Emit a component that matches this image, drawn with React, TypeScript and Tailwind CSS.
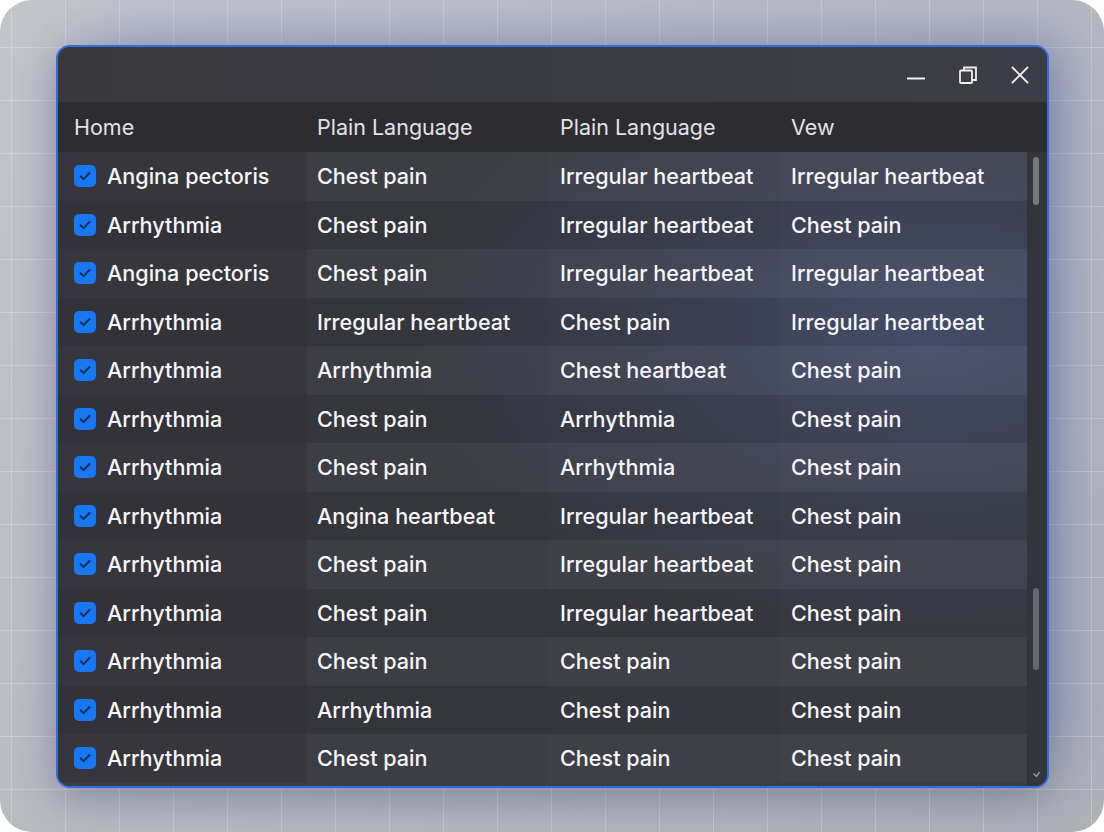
import React from "react";

const rows: [string, string, string, string][] = [
  ["Angina pectoris", "Chest pain", "Irregular heartbeat", "Irregular heartbeat"],
  ["Arrhythmia", "Chest pain", "Irregular heartbeat", "Chest pain"],
  ["Angina pectoris", "Chest pain", "Irregular heartbeat", "Irregular heartbeat"],
  ["Arrhythmia", "Irregular heartbeat", "Chest pain", "Irregular heartbeat"],
  ["Arrhythmia", "Arrhythmia", "Chest heartbeat", "Chest pain"],
  ["Arrhythmia", "Chest pain", "Arrhythmia", "Chest pain"],
  ["Arrhythmia", "Chest pain", "Arrhythmia", "Chest pain"],
  ["Arrhythmia", "Angina heartbeat", "Irregular heartbeat", "Chest pain"],
  ["Arrhythmia", "Chest pain", "Irregular heartbeat", "Chest pain"],
  ["Arrhythmia", "Chest pain", "Irregular heartbeat", "Chest pain"],
  ["Arrhythmia", "Chest pain", "Chest pain", "Chest pain"],
  ["Arrhythmia", "Arrhythmia", "Chest pain", "Chest pain"],
  ["Arrhythmia", "Chest pain", "Chest pain", "Chest pain"],
];

function Check() {
  return (
    <span className="flex h-[22px] w-[22px] shrink-0 items-center justify-center rounded-[5px] bg-[#1877f2]">
      <svg width="16" height="16" viewBox="0 0 16 16" fill="none">
        <path d="M3.5 8.2l3 3 6-6.2" stroke="#17264a" strokeWidth="1.8" strokeLinecap="round" strokeLinejoin="round" />
      </svg>
    </span>
  );
}

export default function App() {
  return (
    <div className="h-[832px] w-[1104px] bg-white font-['Inter','Liberation_Sans',sans-serif]">
      <div className="h-full w-full rounded-[32px] bg-[#b3b5bc] [background-image:linear-gradient(to_right,rgba(255,255,255,0.24)_1px,transparent_1px),linear-gradient(to_bottom,rgba(255,255,255,0.24)_1px,transparent_1px),linear-gradient(135deg,#c2c4ca,#aeb0b8)] [background-size:54px_53px,54px_53px,100%_100%] [background-position:11px_47px,11px_47px,0_0] pl-[56px] pt-[45px]">
        <div className="flex h-[743px] w-[993px] flex-col overflow-hidden rounded-[14px] border-2 border-[#2f6fe0] bg-[#38383e] shadow-[0_10px_40px_rgba(40,50,90,0.35),30px_-20px_60px_-12px_rgba(70,95,200,0.28)]">
          {/* title bar */}
          <div className="flex h-[55px] shrink-0 items-center justify-end gap-[32px] bg-[linear-gradient(90deg,#38383d,#3c3d46)] pr-[17px]">
            <svg width="20" height="20" viewBox="0 0 20 20" fill="none">
              <path d="M1 13.5h18" stroke="#f0f0f2" strokeWidth="1.8" />
            </svg>
            <svg width="20" height="20" viewBox="0 0 20 20" fill="none">
              <rect x="2" y="5.5" width="12" height="12.5" rx="1" stroke="#f0f0f2" strokeWidth="1.8" />
              <path d="M6 5.5V2.5h12v12.5h-4" stroke="#f0f0f2" strokeWidth="1.8" />
            </svg>
            <svg width="20" height="20" viewBox="0 0 20 20" fill="none">
              <path d="M2.5 2.5l15 15M17.5 2.5l-15 15" stroke="#f0f0f2" strokeWidth="1.8" strokeLinecap="round" />
            </svg>
          </div>
          {/* header */}
          <div className="grid h-[50px] shrink-0 grid-cols-[249px_242px_231px_247px_20px] items-center bg-[#2c2c31] text-[21.5px] text-[#e2e2e6]">
            <div className="pl-[16px]">Home</div>
            <div className="pl-[10px]">Plain Language</div>
            <div className="pl-[11px]">Plain Language</div>
            <div className="pl-[11px]">Vew</div>
            <div />
          </div>
          {/* body */}
          <div className="relative flex flex-1 overflow-hidden bg-[radial-gradient(ellipse_520px_300px_at_88%_28%,#47506d_0%,#3f4352_55%,#3b3c44_100%)]">
            <div className="flex-1">
              {rows.map((r, i) => (
                <div
                  key={i}
                  className={
                    "grid h-[48.5px] grid-cols-[249px_242px_231px_247px] items-center text-[21.6px] font-medium text-[#f5f5f7] " +
                    (i % 2 === 0 ? "bg-white/[0.03]" : "bg-black/[0.05]")
                  }
                >
                  <div className="flex h-full items-center gap-[11px] bg-[#2e2e33]/60 pl-[16px]">
                    <Check />
                    <span>{r[0]}</span>
                  </div>
                  <div className="flex h-full items-center bg-black/[0.05] pl-[10px]">{r[1]}</div>
                  <div className="flex h-full items-center bg-black/[0.02] pl-[11px]">{r[2]}</div>
                  <div className="flex h-full items-center pl-[11px]">{r[3]}</div>
                </div>
              ))}
            </div>
            <div className="relative w-[20px] shrink-0 bg-[#34353b]">
              <div className="absolute left-[6px] top-[5px] h-[48px] w-[6px] rounded-full bg-[#77787e]" />
              <div className="absolute left-[6px] top-[436px] h-[82px] w-[6px] rounded-full bg-[#66676d]" />
              <svg className="absolute bottom-[7px] left-[5px]" width="9" height="9" viewBox="0 0 9 9" fill="none">
                <path d="M1.5 3.5l3 3 3-4.5" stroke="#9a9ba1" strokeWidth="1.4" />
              </svg>
            </div>
          </div>
        </div>
      </div>
    </div>
  );
}
